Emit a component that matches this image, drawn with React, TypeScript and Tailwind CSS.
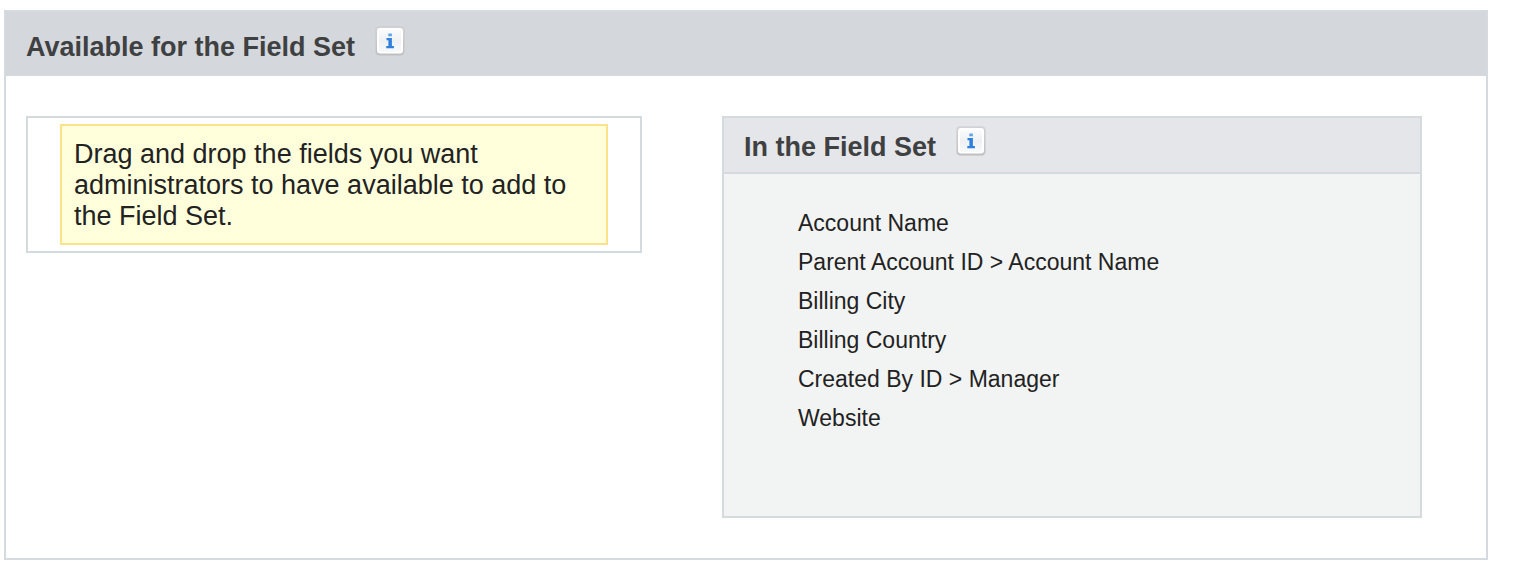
const FIELDS = [
  "Account Name",
  "Parent Account ID > Account Name",
  "Billing City",
  "Billing Country",
  "Created By ID > Manager",
  "Website",
];

function InfoButton({ label }: { label: string }) {
  return (
    <button type="button" aria-label={label} className="block size-[30px] shrink-0">
      <svg viewBox="0 0 30 30" className="size-full" aria-hidden="true">
        <defs>
          <linearGradient id="info-face" x1="0" y1="0" x2="0" y2="1">
            <stop offset="0" stopColor="#fbfbfc" />
            <stop offset="0.5" stopColor="#eef0f3" />
            <stop offset="1" stopColor="#f8f9fa" />
          </linearGradient>
          <linearGradient id="info-edge" x1="0" y1="0" x2="0" y2="1">
            <stop offset="0" stopColor="#d2d2d3" />
            <stop offset="1" stopColor="#bfbfc0" />
          </linearGradient>
        </defs>
        <rect x="0" y="0" width="30" height="30" rx="4.5" fill="#c6c6c8" fillOpacity="0.45" />
        <rect x="0.9" y="0.9" width="28.2" height="28.4" rx="4" fill="url(#info-edge)" />
        <rect x="2" y="2" width="26" height="25.5" rx="3" fill="#ffffff" />
        <rect x="4" y="4" width="22" height="22" rx="2" fill="url(#info-face)" />
        <path d="M13.3 7.5h3.6v2.8h-3.6z" fill="#5fa6e8" />
        <path d="M11.5 12h5.4v8h2v2.2h-7.6V20h2.1v-5.8h-1.9z" fill="#2f80dc" />
      </svg>
    </button>
  );
}

export default function App() {
  return (
    <main className="pt-[10px] pr-[30px] pb-4 pl-1 font-['Liberation_Sans',Arial,sans-serif] text-[#222222]">
      <section className="border-2 border-[#d4dadd] bg-white">
        <header className="flex h-16 items-start gap-5 bg-[#d4d7dc] pt-[14px] pl-5">
          <h2 className="pt-[5px] text-[27px] leading-8 font-bold text-[#3f4041]">Available for the Field Set</h2>
          <InfoButton label="About available fields" />
        </header>
        <div className="grid grid-cols-[616fr_700fr] items-start gap-20 pt-10 pr-16 pb-10 pl-5">
          <div className="border-2 border-[#d4dadd] px-8 py-[6px]">
            <p className="border-2 border-[#f9e28a] bg-[#ffffdc] px-3 pt-[13px] pb-[11px] text-[27px] leading-[31px]">
              Drag and drop the fields you want administrators to have available to add to the Field Set.
            </p>
          </div>
          <section className="border-2 border-[#d4dadd] bg-[#f2f4f3]">
            <header className="flex h-14 items-start gap-5 border-b-2 border-[#d4dadd] bg-[#e5e6ea] pt-2 pl-5">
              <h3 className="pt-[5px] text-[27px] leading-8 font-bold text-[#3f4041]">In the Field Set</h3>
              <InfoButton label="About fields in the set" />
            </header>
            <ul className="px-[74px] pt-[30px] pb-[78px] text-[23px] leading-[39px]">
              {FIELDS.map((field) => (
                <li key={field}>{field}</li>
              ))}
            </ul>
          </section>
        </div>
      </section>
    </main>
  );
}
